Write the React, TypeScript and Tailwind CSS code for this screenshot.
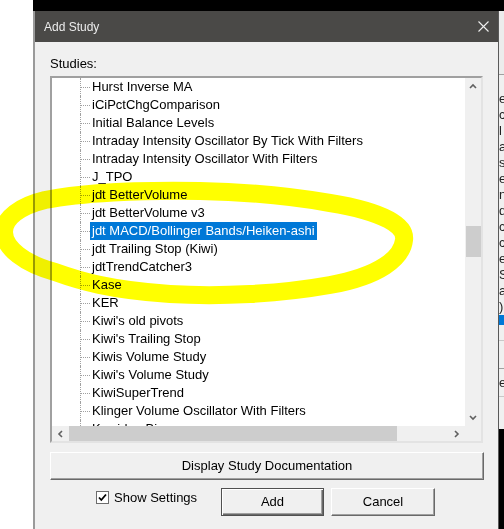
import React from 'react';

const STUDIES = [
  'Hurst Inverse MA',
  'iCiPctChgComparison',
  'Initial Balance Levels',
  'Intraday Intensity Oscillator By Tick With Filters',
  'Intraday Intensity Oscillator With Filters',
  'J_TPO',
  'jdt BetterVolume',
  'jdt BetterVolume v3',
  'jdt MACD/Bollinger Bands/Heiken-ashi',
  'jdt Trailing Stop (Kiwi)',
  'jdtTrendCatcher3',
  'Kase',
  'KER',
  "Kiwi's old pivots",
  "Kiwi's Trailing Stop",
  'Kiwis Volume Study',
  "Kiwi's Volume Study",
  'KiwiSuperTrend',
  'Klinger Volume Oscillator With Filters',
  'Kwaidan Bias',
];

const SELECTED = 8;

const EDGE_LETTERS = ['e', 'c', 'l', 'a', 's', 'e', 'n', 'd', 'c', 'c', 'e', 'S', 'a', ')'];

function Chevron({ dir }: { dir: 'up' | 'down' | 'left' | 'right' }) {
  const pts =
    dir === 'up'
      ? '1,5 4,2 7,5'
      : dir === 'down'
        ? '1,2 4,5 7,2'
        : dir === 'left'
          ? '5,1 2,4 5,7'
          : '2,1 5,4 2,7';
  return (
    <svg width="8" height="8" viewBox="0 0 8 8">
      <polyline points={pts} fill="none" stroke="#606060" strokeWidth="1.6" />
    </svg>
  );
}

function StudyRow({ name, selected }: { name: string; selected: boolean }) {
  return (
    <div className="flex h-[18px] shrink-0 items-stretch">
      <div className="w-[28px] shrink-0" />
      <div className="w-[1px] shrink-0 border-l border-dotted border-[#a0a0a0]" />
      <div className="w-[9px] shrink-0">
        <div className="h-[10px] border-b border-dotted border-[#a0a0a0]" />
      </div>
      <span
        className={
          'whitespace-nowrap px-[2px] text-[13px] leading-[18px] ' +
          (selected ? 'bg-[#0078d7] text-white' : 'text-black')
        }
      >
        {name}
      </span>
    </div>
  );
}

function ClassicButton({ label, isDefault, className }: { label: string; isDefault?: boolean; className: string }) {
  return (
    <button
      className={
        'flex items-center justify-center bg-[#f0f0f0] text-[13px] text-black ' +
        (isDefault
          ? 'border border-[#505050] shadow-[inset_1px_1px_0_#ffffff,inset_-1px_-1px_0_#696969,inset_-2px_-2px_0_#a0a0a0] '
          : 'border-t border-l border-t-[#ffffff] border-l-[#ffffff] border-r border-b border-r-[#696969] border-b-[#696969] shadow-[inset_-1px_-1px_0_#a0a0a0] ') +
        className
      }
    >
      {label}
    </button>
  );
}

export default function App() {
  return (
    <div className="relative flex h-[529px] w-[504px] overflow-hidden bg-white font-['Liberation_Sans',Arial,sans-serif]">
      {/* window behind, left */}
      <div className="w-[33px] shrink-0 bg-white" />

      <div className="flex w-[471px] shrink-0 flex-col">
        <div className="h-[11px] shrink-0 bg-black" />

        <div className="flex flex-1">
          {/* dialog */}
          <div className="flex w-[466px] shrink-0 flex-col border-l-2 border-r border-l-[#9a9a9a] border-r-[#5a5a5a] bg-[#f0f0f0]">
            <div className="flex h-[31px] shrink-0 items-center justify-between bg-[#4a4947] pl-[9px] pr-[9px]">
              <span className="text-[12px] text-[#ececec]">Add Study</span>
              <svg width="11" height="11" viewBox="0 0 11 11">
                <path d="M0.5 0.5 L10.5 10.5 M10.5 0.5 L0.5 10.5" stroke="#f0f0f0" strokeWidth="1.1" />
              </svg>
            </div>

            <div className="flex flex-col pl-[15px]">
              <div className="mt-[13px] h-[18px] text-[13px] leading-[18px] text-black">Studies:</div>

              {/* list box */}
              <div className="mt-[3px] flex h-[367px] w-[433px] flex-col border-2 border-t-[#a0a0a0] border-l-[#a0a0a0] border-r-[#e3e3e3] border-b-[#e3e3e3] bg-white">
                <div className="flex h-[348px] shrink-0">
                  <div className="flex w-[413px] flex-col overflow-hidden">
                    {STUDIES.map((s, i) => (
                      <StudyRow key={s} name={s} selected={i === SELECTED} />
                    ))}
                  </div>
                  <div className="flex w-[16px] flex-col bg-[#f0f0f0]">
                    <div className="flex h-[17px] items-center justify-center">
                      <Chevron dir="up" />
                    </div>
                    <div className="ml-[1px] mt-[131px] h-[31px] bg-[#cdcdcd]" />
                    <div className="flex-1" />
                    <div className="flex h-[17px] items-center justify-center">
                      <Chevron dir="down" />
                    </div>
                  </div>
                </div>
                <div className="flex h-[15px] shrink-0">
                  <div className="flex w-[413px] bg-[#f0f0f0]">
                    <div className="flex w-[17px] items-center justify-center">
                      <Chevron dir="left" />
                    </div>
                    <div className="w-[328px] bg-[#cdcdcd]" />
                    <div className="flex-1" />
                    <div className="flex w-[17px] items-center justify-center">
                      <Chevron dir="right" />
                    </div>
                  </div>
                  <div className="w-[16px] bg-[#f0f0f0]" />
                </div>
              </div>

              <ClassicButton label="Display Study Documentation" className="mt-[9px] h-[28px] w-[434px]" />

              <div className="mt-[8px] flex h-[28px] items-start">
                <div className="ml-[46px] mt-[3px] flex w-[125px] items-center gap-[5px]">
                  <div className="flex h-[13px] w-[13px] items-center justify-center border border-[#6d6d6d] bg-white">
                    <svg width="9" height="9" viewBox="0 0 9 9">
                      <polyline points="1,4.5 3.3,7 8,1.5" fill="none" stroke="#000" strokeWidth="1.8" />
                    </svg>
                  </div>
                  <span className="text-[13px] leading-[13px] text-black">Show Settings</span>
                </div>
                <ClassicButton label="Add" isDefault className="h-[28px] w-[103px]" />
                <ClassicButton label="Cancel" className="ml-[7px] h-[28px] w-[104px]" />
              </div>
            </div>
          </div>

          {/* window behind, right */}
          <div className="flex w-[5px] shrink-0 flex-col overflow-hidden bg-[#f0f0f0]">
            <div className="h-[64px] shrink-0 border-b border-[#a0a0a0] bg-[#ececec]" />
            <div className="h-[16px] shrink-0" />
            {EDGE_LETTERS.map((c, i) => (
              <div key={i} className="h-[16px] shrink-0 text-[13px] leading-[16px] text-[#222]">
                {c}
              </div>
            ))}
            <div className="h-[10px] shrink-0 bg-[#0078d7]" />
            <div className="h-[16px] shrink-0 border-b border-[#c8c8c8]" />
            <div className="h-[28px] shrink-0 border-b border-[#a0a0a0]" />
            <div className="h-[28px] shrink-0 border-b border-[#c8c8c8] text-[13px] leading-[28px] text-[#222]">e</div>
            <div className="h-[32px] shrink-0" />
            <div className="flex-1 bg-black" />
          </div>
        </div>
      </div>

      {/* highlighter annotation */}
      <svg
        className="pointer-events-none absolute inset-0 mix-blend-multiply"
        width="504"
        height="529"
        viewBox="0 0 504 529"
      >
        <path
          d="M404 240 C406 226 385 212 330 203 C290 196 250 192 200 191 C140 190 80 193 45 200 C20 206 4 218 4 232 C4 248 25 264 55 272 C80 281 110 290 170 294 C220 297 280 294 330 285 C380 276 402 258 404 240 Z"
          fill="none"
          stroke="#ffff00"
          strokeWidth="18"
          strokeLinejoin="round"
        />
      </svg>
    </div>
  );
}
